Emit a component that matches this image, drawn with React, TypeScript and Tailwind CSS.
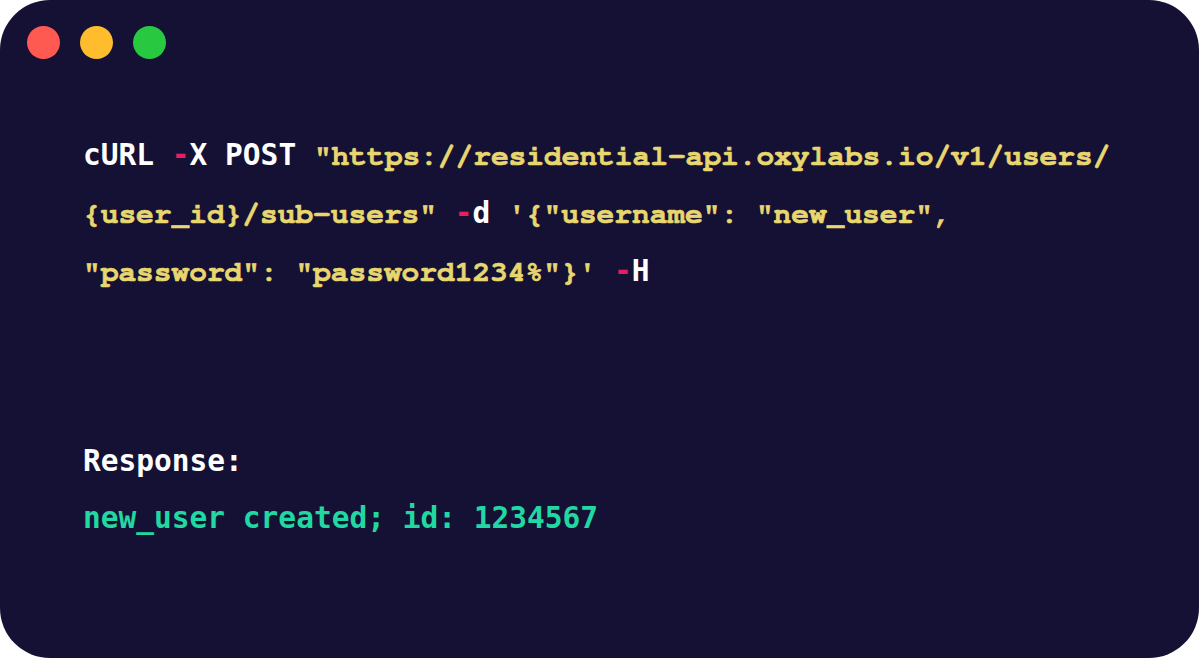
const Y = ({ children }: { children: string }) => (
    <span className="[font-family:'Nimbus_Mono_PS','FreeMono','Courier_New',Courier,'Liberation_Mono',monospace] text-[#e8d66f] [-webkit-text-stroke:0.7px_#e8d66f]">
        {children}
    </span>
);

const P = ({ children }: { children: string }) => <span className="text-[#ea1d63]">{children}</span>;

const App = () => {
    return (
        <div className="h-[658px] w-[1199px] bg-white">
            <div className="flex h-full w-full flex-col rounded-[50px] bg-[#141135] pt-[26px] pl-[27px]">
                <div className="flex gap-[20px]">
                    <span className="h-[33px] w-[33px] rounded-full bg-[#ff5a52]" />
                    <span className="h-[33px] w-[33px] rounded-full bg-[#ffbd2e]" />
                    <span className="h-[33px] w-[33px] rounded-full bg-[#28c941]" />
                </div>
                <div className="mt-[68px] pl-[56px] [font-family:'DejaVu_Sans_Mono',monospace] text-[29.5px] leading-[57px] font-bold whitespace-pre text-white">
                    <div>
                        cURL <P>-</P>X POST <Y>"https://residential-api.oxylabs.io/v1/users/</Y>
                    </div>
                    <div>
                        <Y>{'{user_id}/sub-users"'}</Y> <P>-</P>d <Y>{`'{"username": "new_user",`}</Y>
                    </div>
                    <div>
                        <Y>{`"password": "password1234%"}'`}</Y> <P>-</P>H
                    </div>
                    <div className="mt-[132px]">Response:</div>
                    <div className="text-[#22d8a2]">new_user created; id: 1234567</div>
                </div>
            </div>
        </div>
    );
};

export default App;
